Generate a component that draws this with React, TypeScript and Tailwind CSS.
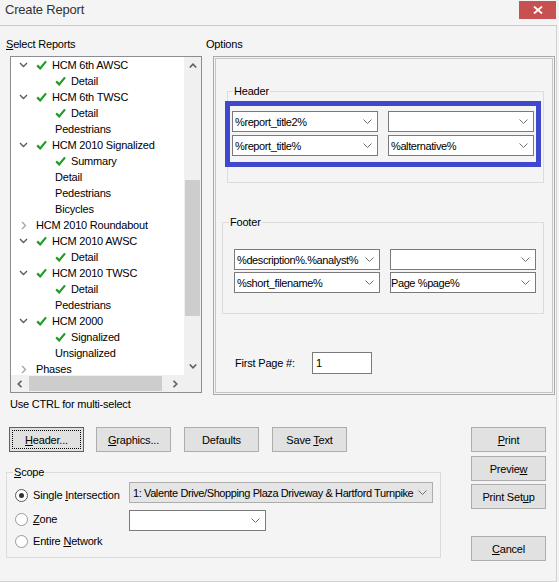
import React from "react";

type TreeNode = {
  level: 1 | 2;
  label: string;
  check?: boolean;
  open?: boolean;
};

const TREE: TreeNode[] = [
  { level: 1, label: "HCM 6th AWSC", check: true, open: true },
  { level: 2, label: "Detail", check: true },
  { level: 1, label: "HCM 6th TWSC", check: true, open: true },
  { level: 2, label: "Detail", check: true },
  { level: 2, label: "Pedestrians" },
  { level: 1, label: "HCM 2010 Signalized", check: true, open: true },
  { level: 2, label: "Summary", check: true },
  { level: 2, label: "Detail" },
  { level: 2, label: "Pedestrians" },
  { level: 2, label: "Bicycles" },
  { level: 1, label: "HCM 2010 Roundabout" },
  { level: 1, label: "HCM 2010 AWSC", check: true, open: true },
  { level: 2, label: "Detail", check: true },
  { level: 1, label: "HCM 2010 TWSC", check: true, open: true },
  { level: 2, label: "Detail", check: true },
  { level: 2, label: "Pedestrians" },
  { level: 1, label: "HCM 2000", check: true, open: true },
  { level: 2, label: "Signalized", check: true },
  { level: 2, label: "Unsignalized" },
  { level: 1, label: "Phases" },
];

function Check() {
  return (
    <svg width="11" height="10" viewBox="0 0 11 10">
      <path d="M1.2 5.4 L4.2 8.4 L10 1.4" fill="none" stroke="#1f9d1f" strokeWidth="2.2" />
    </svg>
  );
}

function TreeRow({ n }: { n: TreeNode }) {
  return (
    <div className="flex h-[16px] items-center whitespace-nowrap">
      {n.level === 1 ? (
        <span className={`flex w-[25px] shrink-0 ${n.open ? "pl-[8px]" : "pl-[10px]"}`}>
          {n.open ? (
            <svg width="9" height="6" viewBox="0 0 9 6">
              <path d="M1 1 L4.5 4.5 L8 1" fill="none" stroke="#5c5c5c" strokeWidth="1.4" />
            </svg>
          ) : (
            <svg width="6" height="9" viewBox="0 0 6 9">
              <path d="M1 1 L4.5 4.5 L1 8" fill="none" stroke="#a6a6a6" strokeWidth="1.4" />
            </svg>
          )}
        </span>
      ) : (
        <span className="w-[44px] shrink-0" />
      )}
      {n.check && (
        <span className="flex w-[16px] shrink-0">
          <Check />
        </span>
      )}
      <span>{n.label}</span>
    </div>
  );
}

function Arrow({ d, w, h }: { d: string; w: number; h: number }) {
  return (
    <svg width={w} height={h} viewBox={`0 0 ${w} ${h}`}>
      <path d={d} fill="none" stroke="#606060" strokeWidth="1.6" />
    </svg>
  );
}

function Combo({
  value,
  width,
  pad = "pl-[2px]",
  gray = false,
}: {
  value: string;
  width: string;
  pad?: string;
  gray?: boolean;
}) {
  return (
    <div
      className={`flex h-[21px] ${width} items-center gap-[3px] border pr-[5px] ${
        gray ? "border-[#adadad] bg-[#e5e5e5]" : "border-[#7a7a7a] bg-white"
      }`}
    >
      <span className={`flex-1 overflow-hidden whitespace-nowrap tracking-[-0.4px] ${pad}`}>{value}</span>
      <svg width="9" height="5" viewBox="0 0 9 5" className="shrink-0">
        <path d="M0.5 0.5 L4.5 4.5 L8.5 0.5" fill="none" stroke="#707070" strokeWidth="1" />
      </svg>
    </div>
  );
}

function Button({ children, focused = false }: { children: React.ReactNode; focused?: boolean }) {
  return (
    <div
      className={`flex h-[25px] w-[75px] shrink-0 items-center justify-center border bg-[#e1e1e1] ${
        focused
          ? "border-[#0078d7] outline-1 outline-offset-[-4px] outline-dotted outline-black"
          : "border-[#adadad]"
      }`}
    >
      {children}
    </div>
  );
}

function Radio({ checked = false, children }: { checked?: boolean; children: React.ReactNode }) {
  return (
    <div className="flex h-[16px] items-center gap-[5px]">
      <span
        className={`flex h-[13px] w-[13px] items-center justify-center rounded-full border bg-white ${
          checked ? "border-[#5a5a5a]" : "border-[#9a9a9a]"
        }`}
      >
        {checked && <span className="h-[5px] w-[5px] rounded-full bg-[#333]" />}
      </span>
      <span>{children}</span>
    </div>
  );
}

export default function App() {
  return (
    <div className="h-[582px] w-[559px] overflow-hidden bg-[#f4f4f4] font-['Liberation_Sans',Arial,sans-serif] text-[11px] leading-[14px] tracking-[-0.2px] text-black">
      <div className="w-[557px]">
        {/* Title bar */}
        <div className="flex h-[26px] items-start justify-between border-b border-[#cacaca]">
          <span className="pl-[5px] pt-[2px] text-[13px] leading-[16px] text-[#333]">Create Report</span>
          <div className="mr-[1px] mt-[1px] flex h-[18px] w-[37px] items-center justify-center bg-[#c75050]">
            <svg width="10" height="8" viewBox="0 0 10 8">
              <path d="M1 0.5 L9 7.5 M9 0.5 L1 7.5" stroke="white" strokeWidth="1.8" />
            </svg>
          </div>
        </div>

        {/* Body */}
        <div className="h-[556px] border-b border-r border-[#d2d2d2]">
          <div className="flex pt-[10px]">
            {/* Select Reports */}
            <div className="flex w-[206px] shrink-0 flex-col pl-[6px]">
              <span className="leading-[16px]">
                <u>S</u>elect Reports
              </span>
              <div className="ml-[4px] mt-[4px] flex h-[337px] w-[192px] flex-col border border-[#8a8d93] bg-white">
                <div className="flex h-[318px]">
                  <div className="w-[173px] overflow-hidden">
                    {TREE.map((n, i) => (
                      <TreeRow key={i} n={n} />
                    ))}
                  </div>
                  <div className="flex w-[17px] flex-col bg-[#f0f0f0]">
                    <div className="flex h-[17px] items-center justify-center">
                      <Arrow w={8} h={5} d="M0.8 4.5 L4 1.2 L7.2 4.5" />
                    </div>
                    <div className="flex-1">
                      <div className="mx-[1px] mt-[106px] h-[136px] bg-[#cdcdcd]" />
                    </div>
                    <div className="flex h-[17px] items-center justify-center">
                      <Arrow w={8} h={5} d="M0.8 0.5 L4 3.8 L7.2 0.5" />
                    </div>
                  </div>
                </div>
                <div className="flex h-[17px] bg-[#f0f0f0]">
                  <div className="flex w-[173px] items-center">
                    <div className="flex w-[17px] items-center justify-center">
                      <Arrow w={5} h={8} d="M4.5 0.8 L1.2 4 L4.5 7.2" />
                    </div>
                    <div className="ml-[1px] h-[15px] w-[133px] bg-[#cdcdcd]" />
                    <div className="ml-auto flex w-[17px] items-center justify-center">
                      <Arrow w={5} h={8} d="M0.5 0.8 L3.8 4 L0.5 7.2" />
                    </div>
                  </div>
                  <div className="w-[17px]" />
                </div>
              </div>
              <span className="ml-[4px] mt-[4px]">Use CTRL for multi-select</span>
            </div>

            {/* Options */}
            <div className="flex flex-col">
              <span className="leading-[16px]">Options</span>
              <div className="ml-[7px] mt-[4px] h-[339px] w-[342px] border border-[#a8a8a8] p-[1px]">
                <div className="relative flex h-full flex-col border border-[#c6c6c6]">
                  <div className="relative ml-[11px] mt-[32px] h-[92px] w-[317px] border border-[#dcdcdc] pl-[4px] pt-[19px]">
                    <span className="absolute left-[5px] top-[-8px] bg-[#f4f4f4] px-[1px]">Header</span>
                    <div className="grid grid-cols-[146px_146px] gap-x-[10px] gap-y-[3px]">
                      <Combo value="%report_title2%" width="w-[146px]" />
                      <Combo value="" width="w-[146px]" />
                      <Combo value="%report_title%" width="w-[146px]" />
                      <Combo value="%alternative%" width="w-[146px]" />
                    </div>
                  </div>

                  <div className="relative ml-[6px] mt-[39px] h-[92px] w-[322px] border border-[#dcdcdc] pl-[11px] pt-[26px]">
                    <span className="absolute left-[6px] top-[-8px] bg-[#f4f4f4] px-[1px]">Footer</span>
                    <div className="grid grid-cols-[146px_146px] gap-x-[10px] gap-y-[2px]">
                      <Combo value="%description%.%analyst%" width="w-[146px]" />
                      <Combo value="" width="w-[146px]" />
                      <Combo value="%short_filename%" width="w-[146px]" />
                      <Combo value="Page %page%" width="w-[146px]" pad="pl-[0px]" />
                    </div>
                  </div>

                  <div className="mt-[38px] flex items-center pl-[19px]">
                    <span className="w-[77px]">First Page #:</span>
                    <div className="flex h-[22px] w-[60px] items-center border border-[#7a7a7a] bg-white pl-[3px]">1</div>
                  </div>

                  {/* annotation frame */}
                  <div className="pointer-events-none absolute left-[9px] top-[42px] h-[66px] w-[316px] border-[5px] border-[#3f48cc]" />
                </div>
              </div>
            </div>
          </div>

          {/* Bottom area */}
          <div className="mt-[16px] flex">
            <div className="flex w-[471px] shrink-0 flex-col pl-[6px]">
              <div className="ml-[3px] flex">
                <Button focused>
                  <span>
                    <u>H</u>eader...
                  </span>
                </Button>
                <div className="ml-[12px]">
                  <Button>
                    <span>
                      <u>G</u>raphics...
                    </span>
                  </Button>
                </div>
                <div className="ml-[13px]">
                  <Button>Defaults</Button>
                </div>
                <div className="ml-[13px]">
                  <Button>
                    <span>
                      Save <u>T</u>ext
                    </span>
                  </Button>
                </div>
              </div>

              <div className="relative mt-[20px] flex h-[86px] w-[435px] border border-[#dcdcdc] pl-[8px]">
                <span className="absolute left-[6px] top-[-8px] bg-[#f4f4f4] px-[1px]">
                  <u>S</u>cope
                </span>
                <div className="flex w-[114px] shrink-0 flex-col pt-[14px]">
                  <Radio checked>
                    Single <u>I</u>ntersection
                  </Radio>
                  <div className="mt-[8px]">
                    <Radio>
                      <u>Z</u>one
                    </Radio>
                  </div>
                  <div className="mt-[6px]">
                    <Radio>
                      Entire <u>N</u>etwork
                    </Radio>
                  </div>
                </div>
                <div className="flex flex-col gap-[7px] pt-[9px]">
                  <Combo
                    value="1: Valente Drive/Shopping Plaza Driveway & Hartford Turnpike"
                    width="w-[304px]"
                    pad="pl-[3px]"
                    gray
                  />
                  <Combo value="" width="w-[137px]" />
                </div>
              </div>
            </div>

            <div className="flex flex-col">
              <Button>
                <span>
                  <u>P</u>rint
                </span>
              </Button>
              <div className="mt-[4px]">
                <Button>
                  <span>
                    Previe<u>w</u>
                  </span>
                </Button>
              </div>
              <div className="mt-[3px]">
                <Button>
                  <span>
                    Print Set<u>u</u>p
                  </span>
                </Button>
              </div>
              <div className="mt-[27px]">
                <Button>
                  <span>
                    <u>C</u>ancel
                  </span>
                </Button>
              </div>
            </div>
          </div>
        </div>
      </div>
    </div>
  );
}
